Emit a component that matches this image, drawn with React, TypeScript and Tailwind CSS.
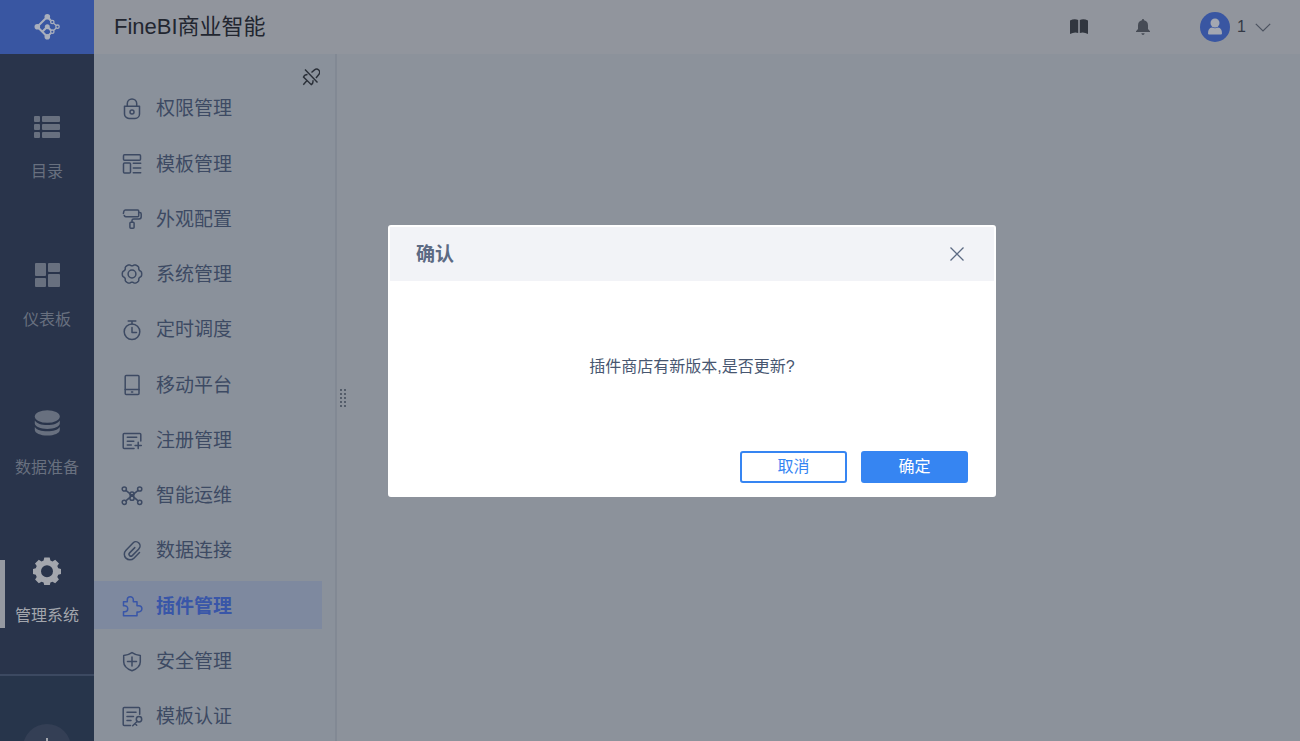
import type { ReactNode } from "react";

type MenuEntry = { label: string; icon: ReactNode; active?: boolean };
type RailEntry = { label: string; icon: ReactNode; active?: boolean };

const gearOutline =
  Array.from({ length: 96 }, (_, i) => {
    const angle = (i / 96) * Math.PI * 2;
    const radius = 8.8 + 0.9 * Math.tanh(1.8 * Math.cos(angle * 6) + 0.9);
    const x = (11 + radius * Math.cos(angle)).toFixed(2);
    const y = (11 + radius * Math.sin(angle)).toFixed(2);
    return `${i === 0 ? "M" : "L"}${x} ${y}`;
  }).join("") + "Z";

const menu: MenuEntry[] = [
  {
    label: "权限管理",
    icon: (
      <>
        <path d="M3.5 8.3h15v7.6a4.5 4.5 0 0 1-4.5 4.5H8a4.5 4.5 0 0 1-4.5-4.5z" />
        <path d="M6.3 8.3V5.6a4.7 4.7 0 0 1 9.4 0v2.7" />
        <circle cx="11" cy="14" r="2" />
      </>
    ),
  },
  {
    label: "模板管理",
    icon: (
      <>
        <rect x="2.5" y="1.8" width="17" height="5.4" rx="1" />
        <rect x="2.5" y="10" width="7" height="10" rx="1" />
        <path d="M12.3 10.3h7.4M12.3 15h7.4M12.3 19.7h7.4" />
      </>
    ),
  },
  {
    label: "外观配置",
    icon: (
      <>
        <path d="M2.4 5.4 3 2.9Q3.3 1.9 4.4 1.9h12.3q1 0 1 1v4.8q0 1-1 1H5Q4 8.7 3.2 7.5" />
        <path d="M17.7 4.6h1q1.5 0 1.5 1.5v2.6q0 2.2-2.2 2.2h-5.300q-1.7 0-1.7 1.6v1.7" />
        <rect x="8.9" y="14.2" width="4.2" height="6" rx="1" />
      </>
    ),
  },
  {
    label: "系统管理",
    icon: (
      <>
        <path d={gearOutline} />
        <circle cx="11" cy="11" r="3.9" />
      </>
    ),
  },
  {
    label: "定时调度",
    icon: (
      <>
        <circle cx="11" cy="12.8" r="7.8" />
        <path d="M7.2 2h7.6M11 2v3M11 8.5v5h4.5" />
      </>
    ),
  },
  {
    label: "移动平台",
    icon: (
      <>
        <rect x="4.2" y="1.6" width="13.8" height="19" rx="1" />
        <path d="M4.2 15.4H18M10.5 18h1.2" />
      </>
    ),
  },
  {
    label: "注册管理",
    icon: (
      <>
        <path d="M13 19.6H3.2q-1 0-1-1V5.4q0-1 1-1h15.600q1 0 1 1V12" />
        <path d="M6.300 8.300h9.400M6.300 12.200h6.500M6.300 16h4M17.200 13.300v6.200M14.100 16.400h6.200" />
      </>
    ),
  },
  {
    label: "智能运维",
    icon: (
      <>
        <circle cx="3.3" cy="5" r="2.1" />
        <circle cx="18.7" cy="5" r="2.1" />
        <circle cx="3.3" cy="18.3" r="2.1" />
        <circle cx="18.7" cy="18.3" r="2.1" />
        <circle cx="11" cy="10" r="2.1" />
        <circle cx="11" cy="14.2" r="2.1" />
        <path d="m4.900 6.400 7.600 6.300M17.100 6.400l-7.600 6.300M4.900 16.900l4.300-3.800M17.100 16.900l-4.300-3.800" />
      </>
    ),
  },
  {
    label: "数据连接",
    icon: (
      <path d="m13.800 7.600-5.200 5.300a1.900 1.900 0 0 0 2.700 2.700l6.500-6.700a4.100 4.100 0 0 0-5.800-5.900l-7 7.200a5.600 5.600 0 0 0 7.900 8l5.600-5.700" />
    ),
  },
  {
    label: "插件管理",
    active: true,
    icon: (
      <path d="M2.500 20.700H16v-3.800h1.800a3.100 3.100 0 0 0 0-6.200H16V6.800h-3.700V4.700a3 3 0 0 0-6 0v2.100H2.500v3.900h1.200a3 3 0 0 1 0 6.100H2.500z" />
    ),
  },
  {
    label: "安全管理",
    icon: (
      <>
        <path d="M11 2.600q4 2.700 8.300 2.900v6.300q0 6-8.300 8.900-8.300-2.900-8.300-8.900V5.500Q7 5.300 11 2.600z" />
        <path d="M11 7v9M6.500 11.500h9" />
      </>
    ),
  },
  {
    label: "模板认证",
    icon: (
      <>
        <path d="M9.500 20.500H3.200q-1 0-1-1V3.500q0-1 1-1h14.500q1 0 1 1v5.700" />
        <path d="M6 7.200h9M6 11.500h6.500M6 15.500h4M16.300 16.200l-4.600 4.600M14 18.500l1.700 1.700" />
        <circle cx="18" cy="14.300" r="2.700" />
      </>
    ),
  },
];

const rail: RailEntry[] = [
  {
    label: "目录",
    icon: (
      <>
        <rect x="1" y="3" width="6" height="6" rx="1" />
        <rect x="9" y="3" width="18" height="6" rx="1" />
        <rect x="1" y="11" width="6" height="6" rx="1" />
        <rect x="9" y="11" width="18" height="6" rx="1" />
        <rect x="1" y="19" width="6" height="6" rx="1" />
        <rect x="9" y="19" width="18" height="6" rx="1" />
      </>
    ),
  },
  {
    label: "仪表板",
    icon: (
      <>
        <rect x="2" y="2" width="11" height="13" rx="1" />
        <rect x="15" y="2" width="12" height="9" rx="1" />
        <rect x="2" y="17" width="11" height="9" rx="1" />
        <rect x="15" y="13" width="12" height="13" rx="1" />
      </>
    ),
  },
  {
    label: "数据准备",
    icon: (
      <>
        <ellipse cx="14.3" cy="7.500" rx="12.500" ry="6.300" />
        <path d="M1.800 11.500c2 3.200 6.500 4.600 12.500 4.600s10.500-1.400 12.500-4.600v3c0 3-5.500 5.400-12.500 5.400S1.800 17.500 1.800 14.500z" />
        <path d="M1.800 18c2 3 6.500 4.300 12.500 4.300S24.800 21 26.800 18v3c0 3-5.500 5.600-12.500 5.600S1.800 24 1.800 21z" />
      </>
    ),
  },
  {
    label: "管理系统",
    active: true,
    icon: (
      <path
        fillRule="evenodd"
        d="M11.300.5h5.400l.7 3 2.100.9L22.200 2.800 26 6.600l-1.700 2.500.9 2.200 2.800.6v5.200l-2.800.7-.9 2.200 1.600 2.600-3.700 3.700-2.700-1.600-2.100.9-.7 2.900h-5.400l-.7-2.900-2.100-.9-2.700 1.600-3.700-3.700L3.700 20l-.9-2.200L0 17.100v-5.200l2.800-.6.9-2.200L2 6.600l3.800-3.800 2.700 1.600 2.100-.9zM14 8.300a6 6 0 1 0 0 12 6 6 0 0 0 0-12z"
      />
    ),
  },
];

function Logo() {
  return (
    <svg viewBox="0 0 28 28" className="size-7 text-[#a9afbd]" fill="none" stroke="currentColor" strokeWidth="2" aria-hidden="true">
      <path d="M14.300 3.700l-10 10 10 10M9.300 18.700l5-5 3.800 3.800M14.300 3.700l3.500 3.800M14.300 23.700l3.800-3.800" />
      <g fill="currentColor" stroke="none">
        <circle cx="14.3" cy="3.7" r="2.8" />
        <circle cx="4.3" cy="13.700" r="2.800" />
        <circle cx="14.3" cy="23.700" r="2.800" />
        <circle cx="14.3" cy="13.700" r="2.500" />
      </g>
      <g strokeWidth="1.3">
        <path d="m20.500 10.200 2.800 2.400M23.300 14.900l-2.800 2.600" />
        <circle cx="19.3" cy="9" r="1.700" />
        <circle cx="24.500" cy="13.700" r="1.700" />
        <circle cx="19.3" cy="18.700" r="1.700" />
      </g>
    </svg>
  );
}

function Rail() {
  return (
    <aside className="flex w-[94px] shrink-0 flex-col bg-[#29344b]">
      <a href="#home" aria-label="FineBI" className="flex h-[54px] shrink-0 items-center justify-center bg-[#3956a2]">
        <Logo />
      </a>
      <nav className="flex shrink-0 flex-col pt-[22px] pb-1.5">
        {rail.map((item) => (
          <a
            key={item.label}
            href="#section"
            className={`relative flex h-[148px] flex-col items-center justify-center gap-4 ${
              item.active ? "text-[#a3a6ad]" : "text-[#68707f]"
            }`}
          >
            {item.active && <span className="absolute left-0 h-[68px] w-[5px] bg-[#9599a1]" />}
            <svg viewBox="0 0 28 28" className="size-7" fill="currentColor" aria-hidden="true">
              {item.icon}
            </svg>
            <span className="text-base leading-[30px]">{item.label}</span>
          </a>
        ))}
      </nav>
      <div className="flex flex-1 flex-col items-center border-t-2 border-[#3c4961] bg-[#27354b] pt-12">
        <button aria-label="添加" className="flex size-12 shrink-0 items-center justify-center rounded-full bg-[#343f55] text-[#a3a6ad]">
          <svg viewBox="0 0 20 20" className="size-5" stroke="currentColor" strokeWidth="2" aria-hidden="true">
            <path d="M10 0v20M0 10h20" />
          </svg>
        </button>
      </div>
    </aside>
  );
}

function Header() {
  return (
    <header className="flex h-[54px] shrink-0 items-center justify-between bg-[#91959d] pr-[29px] pl-5">
      <h1 className="text-[22px] leading-8 text-[#222630]">FineBI商业智能</h1>
      <div className="flex items-center">
        <button aria-label="帮助文档" className="mr-12 text-[#31363f]">
          <svg viewBox="0 0 18 16" className="h-4 w-[18px]" fill="currentColor" aria-hidden="true">
            <path d="M0 1.500Q4.500-.8 8.200 1v13Q4.500 12.500 0 15zM9.800 1Q13.500-.8 18 1.500V15q-4.500-2.500-8.200-1z" />
          </svg>
        </button>
        <button aria-label="消息" className="mr-[50px] text-[#464b55]">
          <svg viewBox="0 0 14 16" className="h-4 w-3.5" fill="currentColor" aria-hidden="true">
            <path d="M7 0q1.100 0 1.100 1.300Q12 2.300 12 6.500V10l2 2.300V13H0v-.7L2 10V6.500Q2 2.300 5.900 1.300 5.900 0 7 0zM5.300 14.200h3.400Q8.300 16 7 16t-1.700-1.800z" />
          </svg>
        </button>
        <button className="flex items-center text-base text-[#343a46]">
          <svg viewBox="0 0 30 30" className="size-[30px]" aria-hidden="true">
            <circle cx="15" cy="15" r="15" fill="#3956a2" />
            <circle cx="15" cy="11" r="4.500" fill="#a3a7b1" />
            <path d="M8 21.500Q8 16 12 15.500q3 1.600 6 0 4 .5 4 6 0 1-1 1H9q-1 0-1-1z" fill="#a3a7b1" />
          </svg>
          <span className="ml-[7px]">1</span>
          <svg viewBox="0 0 16 9" className="ml-[9px] h-[9px] w-4" fill="none" stroke="#4c5360" strokeWidth="1.200" aria-hidden="true">
            <path d="m.8.8 7.200 7.200L15.200.8" />
          </svg>
        </button>
      </div>
    </header>
  );
}

function SideMenu() {
  return (
    <aside className="flex w-[243px] shrink-0 flex-col border-r-2 border-[#828994] bg-[#8a919b]">
      <div className="flex h-[26px] shrink-0 items-end justify-end pr-[15px]">
        <button aria-label="取消固定" className="-mb-1.5 text-[#2a2f38]">
          <svg viewBox="0 0 18 18" className="size-[18px]" fill="none" stroke="currentColor" strokeWidth="1.400" aria-hidden="true">
            <path d="m3 1.500 12.500 13M9.500 4.500l3-2.600q2.300-1.700 4.200.2t.3 4.200L14 10M5.500 6.500Q2.500 6.500 1.500 9l7.800 7.700q2.300-1.500 1.500-4.500M5 12.500l-3.700 4.200" />
          </svg>
        </button>
      </div>
      <ul className="grid h-[663px] shrink-0 grid-rows-12">
        {menu.map((item) => (
          <li key={item.label} className="flex items-center pr-[13px]">
            <a
              href="#menu"
              className={`flex h-12 flex-1 items-center gap-[13px] pl-[27px] text-[19px] ${
                item.active ? "bg-[#7e899f] font-bold text-[#3956a8]" : "text-[#3d4a63]"
              }`}
            >
              <svg
                viewBox="0 0 22 22"
                className="mt-0.5 size-[22px] shrink-0"
                fill="none"
                stroke="currentColor"
                strokeWidth="1.500"
                strokeLinecap="round"
                strokeLinejoin="round"
                aria-hidden="true"
              >
                {item.icon}
              </svg>
              <span className="pt-1">{item.label}</span>
            </a>
          </li>
        ))}
      </ul>
    </aside>
  );
}

function ConfirmDialog() {
  return (
    <div className="fixed inset-0 flex items-center justify-center pb-[19px] pl-[84px]">
      <section
        role="dialog"
        aria-modal="true"
        aria-labelledby="dialog-title"
        className="w-[608px] rounded-[3px] border-2 border-white bg-white"
      >
        <div className="flex h-[54px] items-center justify-between bg-[#f2f3f7] pr-[30px] pl-[26px]">
          <h2 id="dialog-title" className="pt-0.5 text-[19px] font-bold text-[#5c6a83]">
            确认
          </h2>
          <button aria-label="关闭" className="text-[#5c6a83]">
            <svg viewBox="0 0 14 14" className="size-3.5" fill="none" stroke="currentColor" strokeWidth="1.300" aria-hidden="true">
              <path d="m.5.5 13 13M13.500.5l-13 13" />
            </svg>
          </button>
        </div>
        <p className="flex h-[170px] items-center justify-center pt-0.5 text-base text-[#475670]">插件商店有新版本,是否更新?</p>
        <div className="flex justify-end gap-3.5 pr-[26px] pb-3">
          <button className="h-8 w-[107px] rounded-[3px] border-2 border-[#3685f2] text-base leading-none text-[#3685f2]">取消</button>
          <button className="h-8 w-[107px] rounded-[3px] bg-[#3685f2] text-base leading-none text-white">确定</button>
        </div>
      </section>
    </div>
  );
}

export default function App() {
  return (
    <div className="flex h-screen overflow-hidden bg-[#8c929b] font-['Liberation_Sans','Noto_Sans_CJK_SC',sans-serif]">
      <Rail />
      <div className="flex min-w-0 flex-1 flex-col">
        <Header />
        <div className="flex min-h-0 flex-1">
          <SideMenu />
          <main className="flex flex-1 items-center pl-0.5">
            <svg viewBox="0 0 8 18" className="h-[18px] w-2" fill="#3a4353" aria-hidden="true">
              {[1, 5, 9, 13, 17].map((y) => (
                <g key={y}>
                  <circle cx="2" cy={y} r="0.900" />
                  <circle cx="6" cy={y} r="0.900" />
                </g>
              ))}
            </svg>
          </main>
        </div>
      </div>
      <ConfirmDialog />
    </div>
  );
}
